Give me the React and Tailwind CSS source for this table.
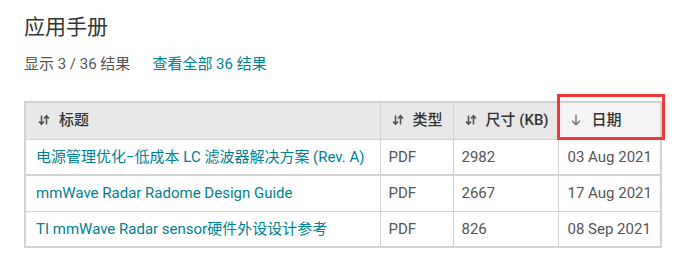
function SortIcon() {
  return (
    <svg width="12" height="12" viewBox="0 0 12 12" className="inline-block" fill="none" stroke="#555" strokeWidth="1.6">
      <path d="M3.5 1.5v8.5M1 7.5l2.5 2.8L6 7.5" />
      <path d="M8.5 10.5V2M6 4.5l2.5-2.8L11 4.5" />
    </svg>
  );
}

function DownIcon() {
  return (
    <svg width="12" height="12" viewBox="0 0 12 12" className="inline-block" fill="none" stroke="#777" strokeWidth="1.5">
      <path d="M6 1v9.5M2 6.8l4 4 4-4" />
    </svg>
  );
}

const rows = [
  { title: "电源管理优化−低成本 LC 滤波器解决方案 (Rev. A)", type: "PDF", size: "2982", date: "03 Aug 2021" },
  { title: "mmWave Radar Radome Design Guide", type: "PDF", size: "2667", date: "17 Aug 2021" },
  { title: "TI mmWave Radar sensor硬件外设设计参考", type: "PDF", size: "826", date: "08 Sep 2021" },
];

export default function App() {
  return (
    <div className="w-[691px] h-[266px] bg-white pl-6 pt-[13px] font-['Roboto','Noto_Sans_CJK_SC',sans-serif]">
      <h1 className="text-[21px] leading-[28px] text-[#333] font-normal">应用手册</h1>
      <div className="mt-[12px] text-[15px] leading-[22px] text-[#555] flex gap-[22px]">
        <span>显示 3 / 36 结果</span>
        <span className="text-[#00818f]">查看全部 36 结果</span>
      </div>
      <table className="mt-[26px] border-collapse border-2 border-[#d2d2d2] text-[15px] table-fixed w-[636px]">
        <thead>
          <tr className="bg-[#e8e8e8] h-[37px] text-[#333]">
            <th className="w-[355px] border border-[#d2d2d2] text-left pl-[12px] font-medium">
              <span className="inline-flex items-center gap-[9px]"><SortIcon />标题</span>
            </th>
            <th className="w-[73px] border border-[#d2d2d2] text-left pl-[11px] font-medium">
              <span className="inline-flex items-center gap-[9px]"><SortIcon />类型</span>
            </th>
            <th className="w-[105px] border border-[#d2d2d2] text-left pl-[11px] font-medium">
              <span className="inline-flex items-center gap-[9px]"><SortIcon />尺寸 (KB)</span>
            </th>
            <th className="w-[103px] border border-[#d2d2d2] text-left pl-[11px] font-medium bg-[#f4f4f4] relative">
              <span className="inline-flex items-center gap-[10px]"><DownIcon />日期</span>
              <div className="absolute left-[-2px] right-[-5px] top-[-9px] bottom-[-1px] border-[3px] border-[#f0383a]" />
            </th>
          </tr>
        </thead>
        <tbody className="text-[#555]">
          {rows.map((r, i) => (
            <tr key={i} className={`h-[36px] ${i === 0 ? "border-b-2" : "border-b"} border-[#d2d2d2]`}>
              <td className="border-x border-[#d2d2d2] pl-[10px] text-[#00818f]">{r.title}</td>
              <td className="border-x border-[#d2d2d2] pl-[8px]">{r.type}</td>
              <td className="border-x border-[#d2d2d2] pl-[8px]">{r.size}</td>
              <td className="border-x border-[#d2d2d2] pl-[9px]">{r.date}</td>
            </tr>
          ))}
        </tbody>
      </table>
    </div>
  );
}
